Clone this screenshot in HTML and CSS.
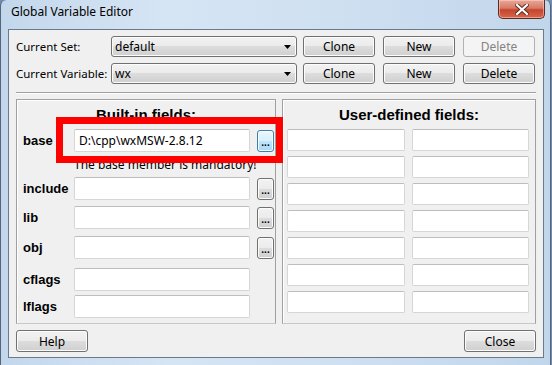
FILE: index.html
```html
<!DOCTYPE html>
<html>
<head>
<meta charset="utf-8">
<link rel="stylesheet" href="styles.css">
</head>
<body>
<div class="window">
  <div class="titlebar">
    <span class="title">Global Variable Editor</span>
    <div class="close-x">
      <svg width="14" height="11" viewBox="0 0 14 11">
        <path d="M2 1 L12 10 M12 1 L2 10" stroke="#5a2a22" stroke-width="4" stroke-linecap="square"/>
        <path d="M2 1 L12 10 M12 1 L2 10" stroke="#ffffff" stroke-width="2.2" stroke-linecap="square"/>
      </svg>
    </div>
  </div>
  <div class="client">
    <div class="top-grid">
      <span class="lbl">Current Set:</span>
      <div class="combo"><span>default</span><svg class="arrow" width="7" height="4" viewBox="0 0 7 4"><path d="M0 0 H7 L3.5 4 Z" fill="#000"/></svg></div>
      <button class="btn">Clone</button>
      <button class="btn">New</button>
      <button class="btn" disabled>Delete</button>
      <span class="lbl">Current Variable:</span>
      <div class="combo"><span>wx</span><svg class="arrow" width="7" height="4" viewBox="0 0 7 4"><path d="M0 0 H7 L3.5 4 Z" fill="#000"/></svg></div>
      <button class="btn">Clone</button>
      <button class="btn">New</button>
      <button class="btn">Delete</button>
    </div>
    <div class="sep"></div>
    <div class="panels">
      <div class="panel builtin">
        <div class="panel-title">Built-in fields:</div>
        <div class="field-grid">
          <span class="flbl">base</span>
          <div class="input"><span>D:\cpp\wxMSW-2.8.12</span></div>
          <button class="browse hot">...</button>

          <span></span>
          <span class="msg">The base member is mandatory!</span>
          <span></span>

          <span class="flbl">include</span>
          <div class="input"></div>
          <button class="browse">...</button>

          <span class="flbl">lib</span>
          <div class="input"></div>
          <button class="browse">...</button>

          <span class="flbl">obj</span>
          <div class="input"></div>
          <button class="browse">...</button>

          <span class="flbl">cflags</span>
          <div class="input"></div>
          <span></span>

          <span class="flbl">lflags</span>
          <div class="input"></div>
          <span></span>
        </div>
      </div>
      <div class="panel user">
        <div class="panel-title">User-defined fields:</div>
        <div class="user-grid">
          <div class="input"></div><div class="input"></div>
          <div class="input"></div><div class="input"></div>
          <div class="input"></div><div class="input"></div>
          <div class="input"></div><div class="input"></div>
          <div class="input"></div><div class="input"></div>
          <div class="input"></div><div class="input"></div>
          <div class="input"></div><div class="input"></div>
        </div>
      </div>
    </div>
    <div class="footer">
      <button class="btn">Help</button>
      <button class="btn">Close</button>
    </div>
  </div>
  <div class="highlight"></div>
</div>
</body>
</html>
```
FILE: styles.css
```css
* { box-sizing: border-box; }
html, body { margin: 0; padding: 0; }
body {
  width: 552px;
  height: 365px;
  overflow: hidden;
  background: #6f8db0;
  font-family: "Noto Sans", "Open Sans", sans-serif;
  font-size: 12px;
  color: #000;
}
.window {
  position: relative;
  width: 551px;
  height: 365px;
  background: linear-gradient(90deg, #c3d7ec 0%, #d6e5f4 30%, #cfe0f1 60%, #c2d6eb 100%);
  border-left: 1px solid #56657a;
  border-right: 1px solid #56657a;
  border-radius: 6px 6px 0 0;
  display: flex;
  flex-direction: column;
}
.titlebar {
  height: 29px;
  display: flex;
  align-items: flex-start;
  padding-left: 10px;
}
.title {
  margin-top: 4px;
  font-size: 12px;
  line-height: 16px;
  color: #000;
}
.close-x {
  margin-left: auto;
  margin-right: 5px;
  width: 47px;
  height: 19px;
  border: 1px solid #5b2b23;
  border-top: none;
  border-radius: 0 0 5px 5px;
  background: linear-gradient(#e9a899 0%, #d87a66 45%, #c4452d 55%, #d8654a 100%);
  box-shadow: inset 0 0 0 1px rgba(255,220,210,0.5);
  display: flex;
  align-items: center;
  justify-content: center;
}
.client {
  margin-left: 7px;
  width: 536px;
  height: 329px;
  background: #f0f0f0;
  border: 1px solid #6a7a8c;
  padding: 6px 7px 0 7px;
  display: flex;
  flex-direction: column;
}
.top-grid {
  display: grid;
  grid-template-columns: 95px 186px 78px 80px 80px;
  grid-template-rows: 21px 21px;
  row-gap: 6px;
  align-items: center;
}
.lbl { line-height: 21px; white-space: nowrap; font-size: 11.5px; }
.combo {
  height: 21px;
  border: 1px solid #707070;
  border-radius: 3px;
  background: linear-gradient(#f2f2f2 0%, #ebebeb 50%, #dddddd 50%, #cfcfcf 100%);
  box-shadow: inset 0 0 0 1px #fcfcfc;
  display: flex;
  align-items: center;
  padding: 0 5px 0 3px;
}
.combo span { flex: 1; line-height: 19px; }
.btn {
  justify-self: end;
  width: 72px;
  height: 21px;
  padding: 0;
  border: 1px solid #707070;
  border-radius: 3px;
  background: linear-gradient(#f2f2f2 0%, #ebebeb 50%, #dddddd 50%, #cfcfcf 100%);
  box-shadow: inset 0 0 0 1px #fcfcfc;
  font-family: inherit;
  font-size: 12px;
  color: #000;
}
.btn:disabled {
  border-color: #adb2b5;
  background: #f4f4f4;
  box-shadow: none;
  color: #838383;
}
.sep {
  margin-top: 8px;
  height: 2px;
  border-top: 1px solid #a0a0a0;
  border-bottom: 1px solid #ffffff;
}
.panels {
  margin-top: 5px;
  display: flex;
  gap: 6px;
  height: 225px;
}
.panel {
  border: 1px solid #a0a0a0;
  border-bottom-color: #c8c8c8;
  box-shadow: inset 1px 1px 0 #ffffff;
}
.builtin { width: 260px; }
.user { width: 254px; }
.panel-title {
  height: 29px;
  line-height: 29px;
  text-align: center;
  font-family: "Liberation Sans", Arial, sans-serif;
  font-weight: bold;
  font-size: 15px;
}
.field-grid {
  display: grid;
  padding-left: 6px;
  grid-template-columns: 44px 176px 17px;
  column-gap: 7px;
  grid-template-rows: 24px 24px 29px 30px 32px 27px 22px;
  align-items: start;
}
.flbl {
  font-family: "Liberation Sans", Arial, sans-serif;
  font-weight: bold;
  font-size: 13px;
  line-height: 23px;
  white-space: nowrap;
}
.input {
  height: 22px;
  background: #fff;
  border: 1px solid #d6d6d6;
  border-top-color: #bdbdbd;
  border-radius: 2px;
  padding-left: 4px;
  line-height: 20px;
}
.builtin .input { height: 23px; }
.builtin .input span { line-height: 21px; }
.msg {
  padding-top: 3px;
  text-align: center;
  line-height: 17px;
  white-space: nowrap;
}
.browse {
  width: 17px;
  height: 22px;
  padding: 0 0 3px 0;
  margin-top: 1px;
  border: 1px solid #707070;
  border-radius: 3px;
  background: linear-gradient(#f2f2f2 0%, #ebebeb 50%, #dddddd 50%, #cfcfcf 100%);
  box-shadow: inset 0 0 0 1px #fcfcfc;
  font-family: "Liberation Sans", Arial, sans-serif;
  font-size: 10px;
  font-weight: bold;
  letter-spacing: 0;
  color: #000;
  line-height: 10px;
  display: flex;
  align-items: flex-end;
  justify-content: center;
}
.browse.hot {
  border-color: #3c7fb1;
  background: linear-gradient(#eaf6fd 0%, #d9f0fc 50%, #bee6fd 50%, #a7d9f5 100%);
}
.user-grid {
  display: grid;
  padding-left: 4px;
  grid-template-columns: 118px 117px;
  column-gap: 7px;
  grid-auto-rows: 22px;
  row-gap: 5px;
}
.footer {
  margin-top: 6px;
  display: flex;
  justify-content: space-between;
}
.footer .btn { height: 22px; }
.highlight {
  position: absolute;
  left: 55px;
  top: 117px;
  width: 227px;
  height: 46px;
  border: 7px solid #ff0000;
}
```
